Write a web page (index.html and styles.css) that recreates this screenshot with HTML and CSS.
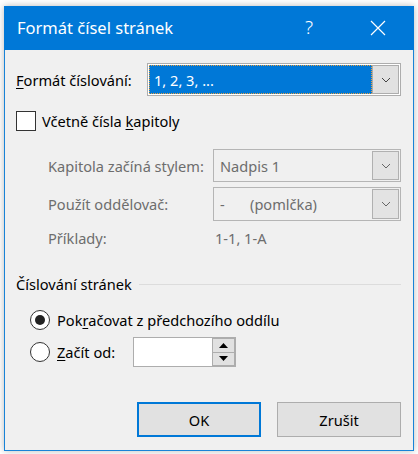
FILE: index.html
```html
<!DOCTYPE html>
<html lang="cs">
<head>
    <meta charset="UTF-8">
    <title>Formát čísel stránek</title>
    <link rel="stylesheet" href="styles.css">
</head>
<body>
    <div class="window">
        <div class="titlebar">
            <div class="title">Formát čísel stránek</div>
            <div class="title-help">?</div>
            <div class="title-close">
                <svg width="16" height="16" viewBox="0 0 16 16"><path d="M1 1 L15 15 M15 1 L1 15" stroke="#fff" stroke-width="1.2" fill="none"/></svg>
            </div>
        </div>
        <div class="content">
            <div class="row row-format">
                <div class="label"><u>F</u>ormát číslování:</div>
                <div class="select select-main">
                    <div class="select-value selected"><span>1, 2, 3, ...</span></div>
                    <div class="select-btn">
                        <svg width="10" height="6" viewBox="0 0 10 6"><path d="M1 1 L5 5 L9 1" stroke="#444" stroke-width="1" fill="none"/></svg>
                    </div>
                </div>
            </div>

            <div class="row row-check">
                <div class="checkbox"></div>
                <div class="label">Včetně čísla <u>k</u>apitoly</div>
            </div>

            <div class="row row-sub row-style">
                <div class="label disabled">Kapitola začíná stylem:</div>
                <div class="select select-sub">
                    <div class="select-value disabled">Nadpis 1</div>
                    <div class="select-btn">
                        <svg width="10" height="6" viewBox="0 0 10 6"><path d="M1 1 L5 5 L9 1" stroke="#666" stroke-width="1" fill="none"/></svg>
                    </div>
                </div>
            </div>

            <div class="row row-sub row-sep">
                <div class="label disabled">Použít oddělovač:</div>
                <div class="select select-sub">
                    <div class="select-value disabled"><span class="dash">-</span>(pomlčka)</div>
                    <div class="select-btn">
                        <svg width="10" height="6" viewBox="0 0 10 6"><path d="M1 1 L5 5 L9 1" stroke="#666" stroke-width="1" fill="none"/></svg>
                    </div>
                </div>
            </div>

            <div class="row row-sub row-example">
                <div class="label disabled">Příklady:</div>
                <div class="example disabled">1-1, 1-A</div>
            </div>

            <div class="group-head">
                <div class="label">Číslování stránek</div>
                <div class="group-line"></div>
            </div>

            <div class="row row-radio">
                <div class="radio checked"><div class="dot"></div></div>
                <div class="label">Pok<u>r</u>ačovat z předchozího oddílu</div>
            </div>

            <div class="row row-radio row-start">
                <div class="radio"></div>
                <div class="label start-label"><u>Z</u>ačít od:</div>
                <div class="spin">
                    <div class="spin-field"></div>
                    <div class="spin-btns">
                        <div class="spin-btn"><svg width="9" height="5" viewBox="0 0 9 5"><path d="M0 5 L4.5 0 L9 5 Z" fill="#000"/></svg></div>
                        <div class="spin-btn"><svg width="9" height="5" viewBox="0 0 9 5"><path d="M0 0 L4.5 5 L9 0 Z" fill="#000"/></svg></div>
                    </div>
                </div>
            </div>

            <div class="buttons">
                <div class="btn btn-default">OK</div>
                <div class="btn">Zrušit</div>
            </div>
        </div>
    </div>
</body>
</html>
```

FILE: styles.css
```css
body {
    margin: 0;
    padding: 6px 4px;
    background: #fff;
    font-family: "Noto Sans", "Open Sans", sans-serif;
    font-size: 14.6px;
    color: #000;
}
u {
    text-decoration-thickness: 1px;
    text-underline-offset: 2px;
}
.window {
    width: 410px;
    height: 445px;
    box-shadow: 0 0 7px rgba(0, 0, 0, 0.28);
    display: flex;
    flex-direction: column;
}
.titlebar {
    height: 44px;
    background: #0078d7;
    color: #fff;
    display: flex;
    align-items: center;
    flex-shrink: 0;
}
.title {
    font-size: 16.5px;
    margin-left: 13px;
    flex: 1;
    padding-bottom: 2px;
}
.title-help {
    font-size: 19px;
    font-weight: 300;
    width: 20px;
    text-align: center;
    margin-right: 51px;
    padding-bottom: 2px;
}
.title-close {
    width: 16px;
    height: 16px;
    margin-right: 28px;
}
.title-close svg {
    display: block;
}
.content {
    flex: 1;
    background: #f0f0f0;
    border: 1px solid #1883d7;
    border-top: none;
    padding: 0 12px 0 11px;
}
.row {
    display: flex;
    align-items: center;
}
.label {
    white-space: nowrap;
}
.disabled {
    color: #6d6d6d;
}
.row-format {
    margin-top: 13px;
    height: 33px;
}
.row-format .label {
    width: 131px;
}
.select {
    height: 33px;
    box-sizing: border-box;
    border: 1px solid #adadad;
    display: flex;
    padding: 1px;
    margin-left: auto;
}
.select-main {
    width: 254px;
    background: #fff;
}
.select-sub {
    width: 188px;
    background: #f0f0f0;
    border-color: #b5b5b5;
}
.select-value {
    flex: 1;
    display: flex;
    align-items: center;
    padding-left: 5px;
}
.select-value.selected {
    background: #0078d7;
    color: #fff;
    outline: 1px dotted #e8a040;
    outline-offset: -1px;
}
.select-btn {
    width: 25px;
    background: #e1e1e1;
    border: 1px solid #adadad;
    display: flex;
    align-items: center;
    justify-content: center;
}
.select-sub .select-btn {
    background: #e3e3e3;
    border-color: #b0b0b0;
}
.dash {
    width: 30px;
}
.row-check {
    margin-top: 15px;
    height: 20px;
}
.checkbox {
    width: 18px;
    height: 18px;
    border: 1px solid #333;
    background: #fff;
    margin-right: 6px;
}
.row-sub {
    padding-left: 32px;
}
.row-style {
    margin-top: 18px;
    height: 33px;
}
.row-sep {
    margin-top: 5px;
    height: 34px;
}
.row-sep .select {
    height: 34px;
}
.row-example {
    margin-top: 7px;
    height: 20px;
}
.example {
    width: 188px;
    margin-left: auto;
    padding-left: 2px;
    box-sizing: border-box;
}
.group-head {
    display: flex;
    align-items: center;
    margin-top: 26px;
    height: 20px;
}
.group-line {
    flex: 1;
    height: 1px;
    background: #dcdcdc;
    margin-left: 7px;
}
.row-radio {
    padding-left: 14px;
    height: 20px;
    margin-top: 16px;
}
.radio {
    width: 18px;
    height: 18px;
    border: 1px solid #333;
    border-radius: 50%;
    background: #fff;
    margin-right: 7px;
    display: flex;
    align-items: center;
    justify-content: center;
}
.radio .dot {
    width: 10px;
    height: 10px;
    border-radius: 50%;
    background: #222;
}
.row-start {
    height: 30px;
    margin-top: 7px;
}
.start-label {
    width: 76px;
}
.spin {
    width: 103px;
    height: 30px;
    box-sizing: border-box;
    border: 1px solid #adadad;
    background: #fff;
    display: flex;
}
.spin-field {
    flex: 1;
}
.spin-btns {
    width: 23px;
    display: flex;
    flex-direction: column;
}
.spin-btn {
    flex: 1;
    background: #e1e1e1;
    border: 1px solid #adadad;
    display: flex;
    align-items: center;
    justify-content: center;
}
.spin-btn + .spin-btn {
    border-top: none;
}
.buttons {
    display: flex;
    justify-content: flex-end;
    gap: 16px;
    margin-top: 35px;
}
.btn {
    width: 124px;
    height: 35px;
    box-sizing: border-box;
    background: #e1e1e1;
    border: 1px solid #adadad;
    display: flex;
    align-items: center;
    justify-content: center;
}
.btn-default {
    border: 2px solid #0078d7;
}
```
